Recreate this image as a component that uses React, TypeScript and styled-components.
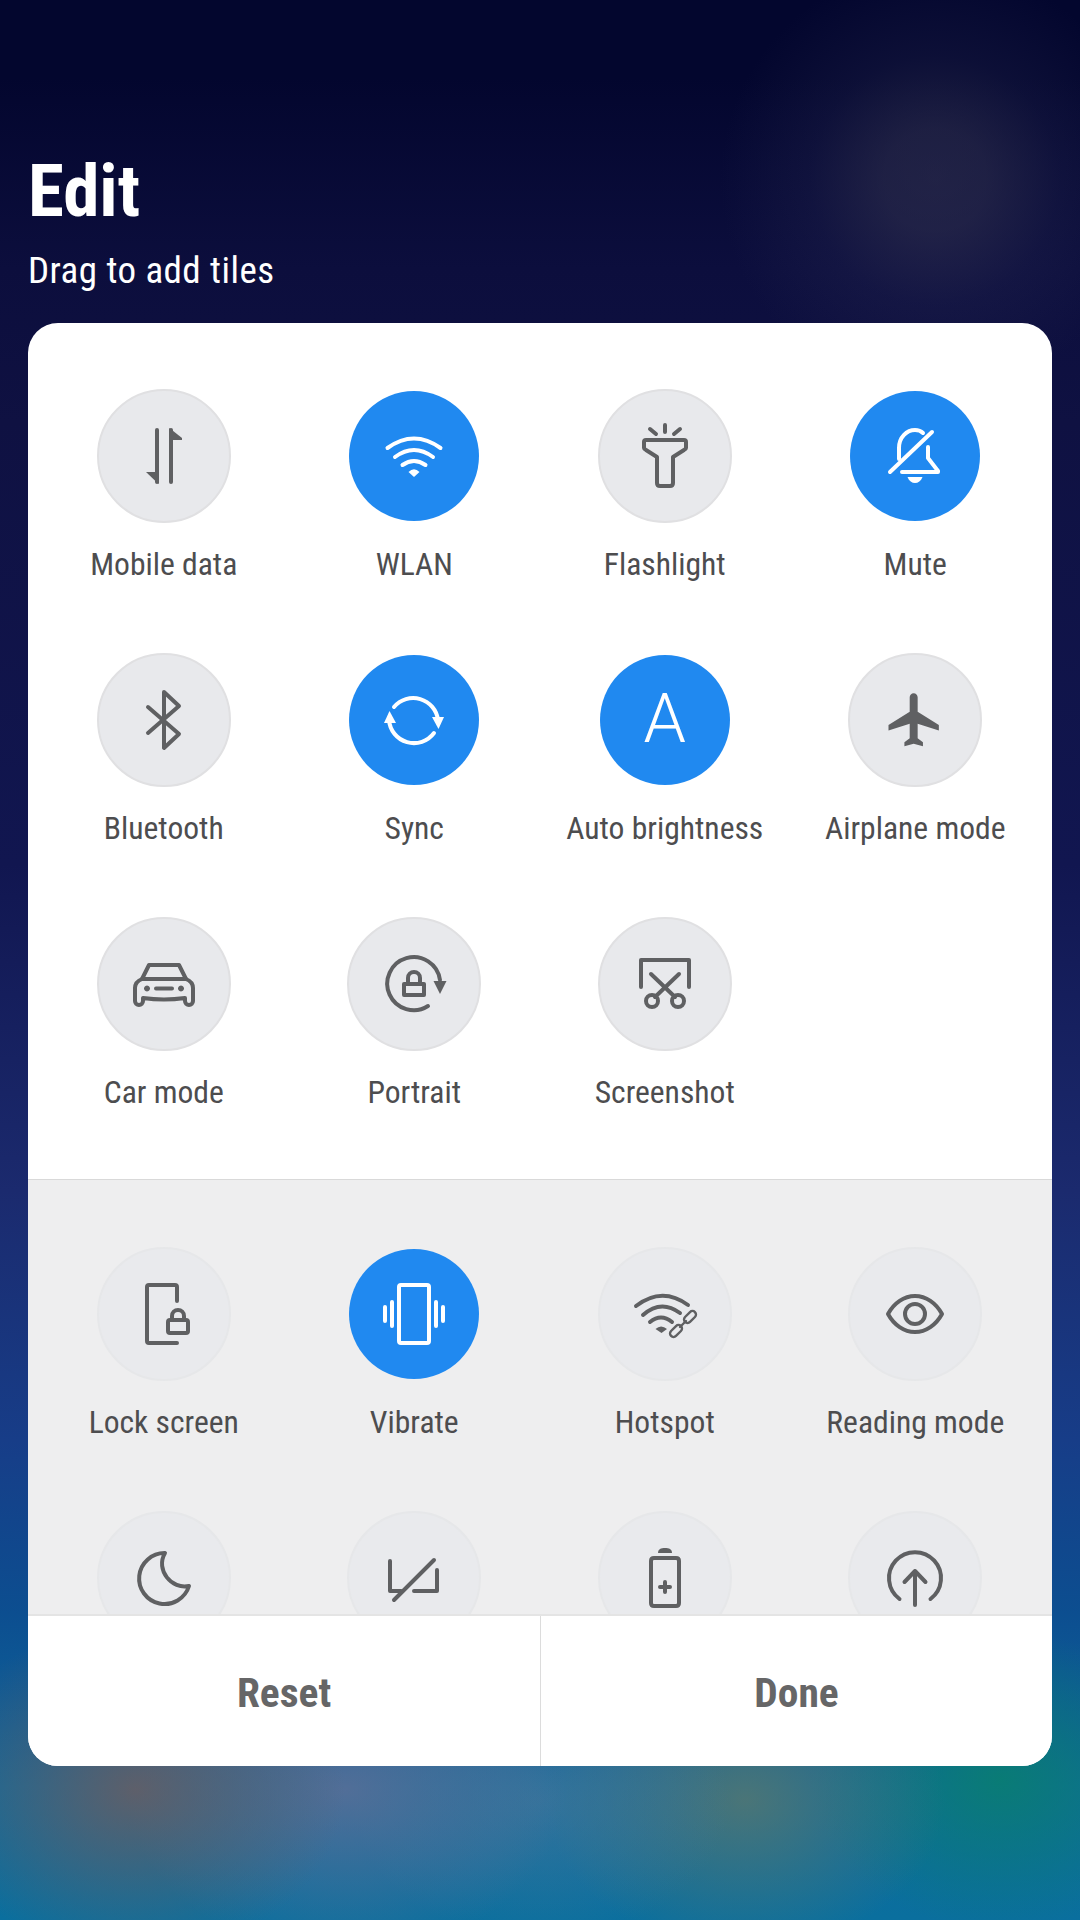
import React from "react";
import styled, { createGlobalStyle } from "styled-components";

const Global = createGlobalStyle`
  html, body { margin: 0; padding: 0; background: #03062e; }
  * { box-sizing: border-box; }
`;

const Screen = styled.div`
  width: 1080px;
  height: 1920px;
  overflow: hidden;
  padding: 0 28px;
  display: flex;
  flex-direction: column;
  font-family: Roboto, "Liberation Sans", sans-serif;
  font-stretch: 75%;
  background:
    radial-gradient(circle 215px at 935px 180px, rgba(62, 62, 88, 0.46) 0%, rgba(62, 62, 88, 0.42) 24%, rgba(50, 52, 90, 0.2) 58%, rgba(40, 44, 90, 0) 100%),
    radial-gradient(ellipse 210px 165px at 135px 1790px, rgba(115, 92, 92, 0.78), rgba(115, 92, 92, 0) 100%),
    radial-gradient(ellipse 220px 165px at 345px 1790px, rgba(110, 112, 150, 0.7), rgba(110, 112, 150, 0) 100%),
    radial-gradient(ellipse 190px 140px at 540px 1800px, rgba(95, 125, 155, 0.45), rgba(95, 125, 155, 0) 100%),
    radial-gradient(ellipse 200px 150px at 745px 1800px, rgba(105, 122, 100, 0.66), rgba(105, 122, 100, 0) 100%),
    radial-gradient(ellipse 190px 150px at 1000px 1780px, rgba(8, 128, 108, 0.8), rgba(8, 128, 108, 0) 100%),
    linear-gradient(180deg, #03062e 0%, #03062e 4%, #0c0e3d 14%, #0f1142 22%, #111650 45%, #1b2a6e 62%, #173d88 75%, #0c4e90 84%, #0f6a9c 93%, #0a6f9e 100%);
`;

const Header = styled.header`
  height: 323px;
  padding-top: 151px;
  flex: none;
  color: #fff;
`;

const Title = styled.h1`
  margin: 0;
  font-size: 73px;
  line-height: 80px;
  font-weight: 700;
`;

const Subtitle = styled.p`
  margin: 18px 0 0;
  font-size: 37px;
  line-height: 44px;
  font-weight: 400;
  letter-spacing: 0.45px;
`;

const Card = styled.main`
  flex: none;
  height: 1443px;
  background: #fff;
  border-radius: 30px;
  overflow: hidden;
  display: flex;
  flex-direction: column;
`;

const ActiveSection = styled.section`
  flex: none;
  height: 857px;
  padding: 66px 11.5px 0 10.5px;
  border-bottom: 1px solid #d9d9d9;
`;

const SpareSection = styled.section`
  flex: 1;
  min-height: 0;
  overflow: hidden;
  padding: 67px 11.5px 0 10.5px;
  background: #eeeeef;
`;

const Grid = styled.div`
  display: grid;
  grid-template-columns: repeat(4, 1fr);
  grid-auto-rows: 264px;
`;

const Tile = styled.div`
  display: flex;
  flex-direction: column;
  align-items: center;
  height: 264px;
`;

const Disc = styled.div<{ $on?: boolean; $muted?: boolean }>`
  width: 134px;
  height: 134px;
  flex: none;
  border-radius: 50%;
  display: flex;
  align-items: center;
  justify-content: center;
  background: ${(p) => (p.$on ? "#2089f0" : p.$muted ? "#e9eaed" : "#e8e9ec")};
  border: ${(p) =>
    p.$on ? "2px solid transparent" : `2px solid ${p.$muted ? "#e6e7e9" : "#e0e0e2"}`};
  background-clip: ${(p) => (p.$on ? "padding-box" : "border-box")};
  color: ${(p) => (p.$on ? "#fff" : "#5f6062")};
`;

const IconSvg = styled.svg.attrs({ viewBox: "-65 -65 130 130", fill: "none" })`
  width: 130px;
  height: 130px;
  stroke: currentColor;
  stroke-width: 4;
  stroke-linecap: round;
  stroke-linejoin: round;
`;

const Filled = styled.path`
  fill: currentColor;
  stroke: none;
`;

const Letter = styled.span`
  font-size: 68px;
  line-height: 68px;
  font-weight: 300;
  font-stretch: 100%;
  position: relative;
  top: -1px;
`;

const Label = styled.div`
  margin-top: 22px;
  font-size: 31.6px;
  line-height: 40px;
  color: #4d4d4f;
  white-space: nowrap;
`;

const Footer = styled.footer`
  flex: none;
  height: 152px;
  display: grid;
  grid-template-columns: 1fr 1fr;
  border-top: 2px solid #e4e4e4;
`;

const FooterButton = styled.button`
  border: 0;
  background: #fff;
  font-family: inherit;
  font-stretch: inherit;
  font-size: 41.5px;
  font-weight: 700;
  color: #666667;
  padding: 2px 0 0;
  & + & {
    border-left: 1px solid #dcdcdc;
  }
`;

type IconProps = { children: React.ReactNode };
const Icon = ({ children }: IconProps) => <IconSvg>{children}</IconSvg>;

const MobileData = () => (
  <Icon>
    <path d="M-7 -26V26" />
    <Filled d="M-5 16H-18L-6 27.500Q-5 28 -5 27Z" />
    <path d="M7 -26V26" />
    <Filled d="M5 -16H18V-18L6 -27.500Q5 -28 5 -27Z" />
  </Icon>
);
const Wifi = () => (
  <Icon>
    <path d="M-26.500 -8Q0 -27 26.500 -8" />
    <path d="M-19 1Q0 -13 19 1" />
    <path d="M-11.500 9Q0 1 11.500 9" />
    <Filled d="M-5.500 16Q0 10.500 5.500 16L0 21Z" />
  </Icon>
);
const Flash = () => (
  <Icon>
    <path d="M0 -31V-24M-15 -27L-9 -22M15 -27L9 -22" />
    <path d="M-19 -16H19Q21 -16 21 -14V-8Q21 -7 19 -6L8 1V27Q8 30 5 30H-5Q-8 30 -8 27V1L-19 -6Q-21 -7 -21 -8V-14Q-21 -16 -19 -16Z" />
  </Icon>
);
const Mute = () => (
  <Icon>
    <path d="M-25 16L17 -24" />
    <path d="M-16 3V-8C-16 -19 -8 -26 0 -26C3 -26 6 -25 8 -23" />
    <path d="M13 -9V2L23 15V16H-13" />
    <Filled d="M-7.500 21H7.500C6 25 3 27 0 27C-3 27 -6 25 -7.500 21Z" />
  </Icon>
);
const Bluetooth = () => (
  <Icon>
    <path d="M-16 -13L15 14L0 28V-28L15 -14L-16 13" />
  </Icon>
);
const Sync = () => (
  <Icon>
    <path d="M-20 -13A25 25 0 0 1 24 0" />
    <path d="M20 13A25 25 0 0 1 -25 0" />
    <Filled d="M18 -3H30L24.500 9Z" />
    <Filled d="M-30 3H-18L-24.500 -9Z" />
  </Icon>
);
const Airplane = () => (
  <Icon>
    <Filled
      transform="translate(-31.800,-32) scale(2.650)"
      d="M21 16v-2l-8-5V3.500c0-.83-.67-1.500-1.500-1.500S10 2.670 10 3.500V9l-8 5v2l8-2.500V19l-2 1.500V22l3.500-1 3.500 1v-1.500L13 19v-5.500l8 2.500z"
    />
  </Icon>
);
const Car = () => (
  <Icon>
    <path d="M-15 -19H15L22 -5C27 -3 29 0 29 4V17A4 4 0 0 1 21 17V14Q0 17 -21 14V17A4 4 0 0 1 -29 17V4C-29 0 -27 -3 -22 -5Z" />
    <path d="M-22 -5H22M-8 4.500H8" />
    <Filled d="M-17 1.500a3 3 0 1 0 .01 0ZM17 1.500a3 3 0 1 0 .01 0Z" />
  </Icon>
);
const Portrait = () => (
  <Icon>
    <path d="M14 22A26.500 26.500 0 1 1 26 -4" />
    <Filled d="M19.500 -3H32.500L26 10Z" />
    <path d="M-10 0H10V11H-10Z" />
    <path d="M-6 0V-6A6 6 0 0 1 6 -6V0" />
  </Icon>
);
const Screenshot = () => (
  <Icon>
    <path d="M-24 3V-24H24V3" />
    <path d="M-14 -10L10 13M14 -10L-10 13" />
    <circle cx="-13" cy="17" r="6" />
    <circle cx="13" cy="17" r="6" />
  </Icon>
);
const LockScreen = () => (
  <Icon>
    <path d="M13 -13V-27Q13 -29 11 -29H-15Q-17 -29 -17 -27V27Q-17 29 -15 29H13" />
    <path d="M4 8Q4 6 6 6H22Q24 6 24 8V17Q24 19 22 19H6Q4 19 4 17Z" />
    <path d="M8 6V2A6 6 0 0 1 20 2V6" />
  </Icon>
);
const Vibrate = () => (
  <Icon>
    <path d="M-13 -29H13Q15 -29 15 -27V27Q15 29 13 29H-13Q-15 29 -15 27V-27Q-15 -29 -13 -29Z" />
    <path d="M-22 -12V12M-29 -7V7M22 -12V12M29 -7V7" />
  </Icon>
);
const Hotspot = () => (
  <Icon>
    <path d="M-29 -8Q-3 -28 23 -9" />
    <path d="M-22 1Q-4 -15 15 -1" />
    <path d="M-15 8Q-4 -1 7 8" />
    <Filled d="M-9.500 15Q-4 10 2 15L-3.500 19Z" />
    <g strokeWidth="2.400">
      <rect x="4" y="13.500" width="14" height="7" rx="3.500" transform="rotate(-45 11 17)" />
      <rect x="18" y="-0.500" width="14" height="7" rx="3.500" transform="rotate(-45 25 3)" />
      <path d="M15 13L21 7" />
    </g>
  </Icon>
);
const Eye = () => (
  <Icon>
    <path d="M-27 0C-21 -11 -11 -18 0 -18C11 -18 21 -11 27 0C21 11 11 18 0 18C-11 18 -21 11 -27 0Z" />
    <circle cx="0" cy="0" r="10" />
  </Icon>
);
const Moon = () => (
  <Icon>
    <path d="M1 -25A25.500 25.500 0 1 0 25 8C8 12 -9 -8 1 -25Z" />
  </Icon>
);
const NoData = () => (
  <Icon>
    <path d="M-24 -17V13H-13M0 13H23V-8M20 -18L-20 22" />
  </Icon>
);
const Battery = () => (
  <Icon>
    <path d="M-11 -20H11Q14 -20 14 -17V25Q14 28 11 28H-11Q-14 28 -14 25V-17Q-14 -20 -11 -20Z" />
    <Filled d="M-7 -25C-7 -29 -4 -30 0 -30C4 -30 7 -29 7 -25Z" />
    <path d="M-5 9H5M0 4V14" />
  </Icon>
);
const Upload = () => (
  <Icon>
    <path d="M-15.500 21A26 26 0 1 1 15.500 21" />
    <path d="M0 27V-7M-10.500 4L0 -7L10.500 4" />
  </Icon>
);

type TileData = { label?: string; on?: boolean; icon: React.ReactNode };

const activeTiles: TileData[] = [
  { label: "Mobile data", icon: <MobileData /> },
  { label: "WLAN", on: true, icon: <Wifi /> },
  { label: "Flashlight", icon: <Flash /> },
  { label: "Mute", on: true, icon: <Mute /> },
  { label: "Bluetooth", icon: <Bluetooth /> },
  { label: "Sync", on: true, icon: <Sync /> },
  { label: "Auto brightness", on: true, icon: <Letter>A</Letter> },
  { label: "Airplane mode", icon: <Airplane /> },
  { label: "Car mode", icon: <Car /> },
  { label: "Portrait", icon: <Portrait /> },
  { label: "Screenshot", icon: <Screenshot /> },
];

const spareTiles: TileData[] = [
  { label: "Lock screen", icon: <LockScreen /> },
  { label: "Vibrate", on: true, icon: <Vibrate /> },
  { label: "Hotspot", icon: <Hotspot /> },
  { label: "Reading mode", icon: <Eye /> },
  { icon: <Moon /> },
  { icon: <NoData /> },
  { icon: <Battery /> },
  { icon: <Upload /> },
];

const renderTiles = (tiles: TileData[], muted: boolean) =>
  tiles.map((t, i) => (
    <Tile key={i}>
      <Disc $on={t.on} $muted={muted}>
        {t.icon}
      </Disc>
      {t.label && <Label>{t.label}</Label>}
    </Tile>
  ));

export default function App() {
  return (
    <Screen>
      <Global />
      <Header>
        <Title>Edit</Title>
        <Subtitle>Drag to add tiles</Subtitle>
      </Header>
      <Card>
        <ActiveSection>
          <Grid>{renderTiles(activeTiles, false)}</Grid>
        </ActiveSection>
        <SpareSection>
          <Grid>{renderTiles(spareTiles, true)}</Grid>
        </SpareSection>
        <Footer>
          <FooterButton>Reset</FooterButton>
          <FooterButton>Done</FooterButton>
        </Footer>
      </Card>
    </Screen>
  );
}
